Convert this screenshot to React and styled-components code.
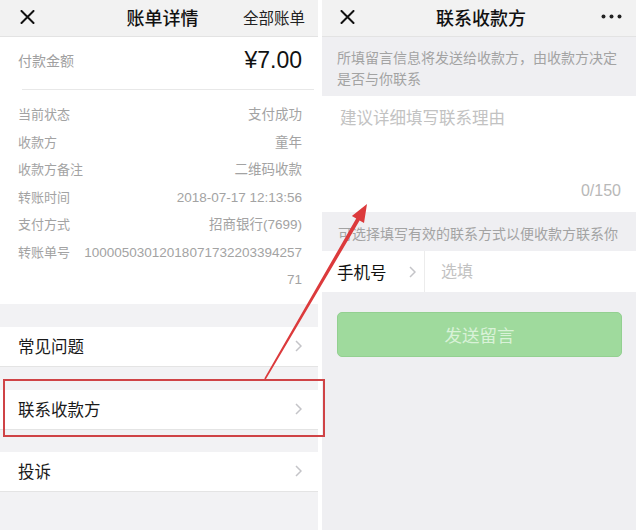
import React from 'react';
import styled, {createGlobalStyle} from 'styled-components';

const GlobalStyle = createGlobalStyle`
  html, body {
    margin: 0;
    padding: 0;
    background: #fff;
  }
  body {
    font-family: "Liberation Sans", "Noto Sans CJK SC", sans-serif;
    color: #1a1a1a;
  }
`;

const Page = styled.div`
  position: relative;
  display: flex;
  gap: 4px;
  width: 640px;
  height: 530px;
  overflow: hidden;
  background: #fff;
`;

const Screen = styled.div`
  display: flex;
  flex-direction: column;
  flex: none;
  width: ${(p) => p.$width}px;
  background: ${(p) => p.$bg || '#f2f2f4'};
`;

const NavBar = styled.div`
  display: grid;
  grid-template-columns: 1fr auto 1fr;
  align-items: center;
  height: 37px;
  padding: 0 ${(p) => p.$right}px 3px ${(p) => p.$left}px;
  box-sizing: border-box;
  background: #f2f2f2;
  border-bottom: 1px solid #e3e3e3;
  flex: none;
`;

const NavTitle = styled.div`
  font-size: 18px;
  font-weight: 500;
  color: #111;
`;

const NavAction = styled.div`
  justify-self: end;
  display: flex;
  align-items: center;
  font-size: 15.5px;
  color: #222;
`;

const CloseIcon = () => (
  <svg width="15" height="14" viewBox="0 0 15 14">
    <path d="M1.5 1 L13.5 13 M13.5 1 L1.5 13" stroke="#111" strokeWidth="2" strokeLinecap="round" />
  </svg>
);

const MoreIcon = () => (
  <svg width="21" height="5" viewBox="0 0 21 5">
    <circle cx="2.5" cy="2.5" r="2" fill="#222" />
    <circle cx="10.5" cy="2.5" r="2" fill="#222" />
    <circle cx="18.5" cy="2.5" r="2" fill="#222" />
  </svg>
);

const Chevron = () => (
  <svg width="7" height="12" viewBox="0 0 7 12">
    <path d="M1 1 L6 6 L1 11" fill="none" stroke="#c4c4c8" strokeWidth="1.5" />
  </svg>
);

/* ---------- left screen: 账单详情 ---------- */

const BillCard = styled.div`
  background: #fff;
  flex: none;
`;

const AmountRow = styled.div`
  display: flex;
  justify-content: space-between;
  align-items: center;
  height: 52px;
  padding: 0 16px 6px 18px;
  box-sizing: border-box;
`;

const AmountLabel = styled.span`
  font-size: 14px;
  color: #a0a0a0;
`;

const AmountValue = styled.span`
  font-size: 23px;
  color: #111;
`;

const Divider = styled.div`
  height: 1px;
  margin: 0 4px 0 22px;
  background: #e8e8e8;
`;

const DetailList = styled.div`
  padding: 11px 16px 10px 18px;
`;

const DetailRow = styled.div`
  display: flex;
  line-height: 27.5px;
`;

const DetailLabel = styled.span`
  flex: none;
  font-size: 13px;
  color: #a3a3a3;
`;

const DetailValue = styled.span`
  flex: 1;
  margin-left: 10px;
  text-align: right;
  font-size: 13.5px;
  color: #a3a3a3;
  word-break: break-all;
`;

const MenuRow = styled.div`
  display: flex;
  justify-content: space-between;
  align-items: center;
  height: 40px;
  margin-top: ${(p) => p.$gap}px;
  padding: 0 16px 0 18px;
  box-sizing: border-box;
  background: #fff;
  border-bottom: 1px solid #e4e4e4;
  font-size: 16.5px;
  color: #1a1a1a;
  flex: none;
`;

/* ---------- right screen: 联系收款方 ---------- */

const Notice = styled.div`
  padding: ${(p) => p.$pad};
  font-size: 14px;
  line-height: 21px;
  color: #a3a3a3;
  flex: none;
`;

const MessageBox = styled.div`
  display: flex;
  flex-direction: column;
  justify-content: space-between;
  height: 116px;
  padding: 11px 15px 10px 18px;
  box-sizing: border-box;
  background: #fff;
  flex: none;
`;

const Placeholder = styled.span`
  font-size: ${(p) => p.$size || 16.5}px;
  line-height: 22px;
  color: #c2c2c2;
`;

const Counter = styled.span`
  align-self: flex-end;
  font-size: 16px;
  line-height: 22px;
  color: #b8b8b8;
`;

const FieldRow = styled.div`
  display: flex;
  align-items: stretch;
  height: 41px;
  background: #fff;
  flex: none;
`;

const FieldLabel = styled.div`
  display: flex;
  align-items: center;
  gap: 22px;
  width: 103px;
  padding-left: 15px;
  box-sizing: border-box;
  border-right: 1px solid #ececec;
  font-size: 16.5px;
  color: #111;
`;

const FieldInput = styled.div`
  display: flex;
  align-items: center;
  padding-left: 16px;
`;

const SendButton = styled.div`
  display: flex;
  align-items: center;
  justify-content: center;
  height: 45px;
  margin: 20px 14px 0 15px;
  border-radius: 5px;
  background: #9fda9d;
  border: 1px solid #93d091;
  box-sizing: border-box;
  font-size: 17.5px;
  color: #d9f2d8;
`;

/* ---------- annotation overlay ---------- */

const Highlight = styled.div`
  position: absolute;
  left: 3px;
  top: 379px;
  width: 322px;
  height: 58px;
  box-sizing: border-box;
  border: 2px solid #cf4346;
  pointer-events: none;
`;

const ArrowLayer = styled.svg`
  position: absolute;
  left: 0;
  top: 0;
  pointer-events: none;
`;

const details = [
  ['当前状态', '支付成功'],
  ['收款方', '童年'],
  ['收款方备注', '二维码收款'],
  ['转账时间', '2018-07-17 12:13:56'],
  ['支付方式', '招商银行(7699)'],
  ['转账单号', '1000050301201807173220339425771'],
];

export default function App() {
  return (
    <Page>
      <GlobalStyle />
      <Screen $width={318}>
        <NavBar $left={20} $right={13}>
          <CloseIcon />
          <NavTitle>账单详情</NavTitle>
          <NavAction>全部账单</NavAction>
        </NavBar>
        <BillCard>
          <AmountRow>
            <AmountLabel>付款金额</AmountLabel>
            <AmountValue>¥7.00</AmountValue>
          </AmountRow>
          <Divider />
          <DetailList>
            {details.map(([label, value]) => (
              <DetailRow key={label}>
                <DetailLabel>{label}</DetailLabel>
                <DetailValue>{value}</DetailValue>
              </DetailRow>
            ))}
          </DetailList>
        </BillCard>
        <MenuRow $gap={23}>
          常见问题
          <Chevron />
        </MenuRow>
        <MenuRow $gap={23}>
          联系收款方
          <Chevron />
        </MenuRow>
        <MenuRow $gap={22}>
          投诉
          <Chevron />
        </MenuRow>
      </Screen>

      <Screen $width={314} $bg="#efeff2">
        <NavBar $left={18} $right={14}>
          <CloseIcon />
          <NavTitle>联系收款方</NavTitle>
          <NavAction>
            <MoreIcon />
          </NavAction>
        </NavBar>
        <Notice $pad="11px 14px 6px 15px">
          所填留言信息将发送给收款方，由收款方决定是否与你联系
        </Notice>
        <MessageBox>
          <Placeholder>建议详细填写联系理由</Placeholder>
          <Counter>0/150</Counter>
        </MessageBox>
        <Notice $pad="12px 10px 6px 16px">可选择填写有效的联系方式以便收款方联系你</Notice>
        <FieldRow>
          <FieldLabel>
            手机号
            <Chevron />
          </FieldLabel>
          <FieldInput>
            <Placeholder $size={16}>选填</Placeholder>
          </FieldInput>
        </FieldRow>
        <SendButton>发送留言</SendButton>
      </Screen>

      <Highlight />
      <ArrowLayer width="640" height="530" viewBox="0 0 640 530">
        <polygon
          points="264.3,378.6 356.2,218.6 351.9,216.1 367,204 364,223.1 359.6,220.6 265.7,379.4"
          fill="#dc3a3c"
        />
      </ArrowLayer>
    </Page>
  );
}
